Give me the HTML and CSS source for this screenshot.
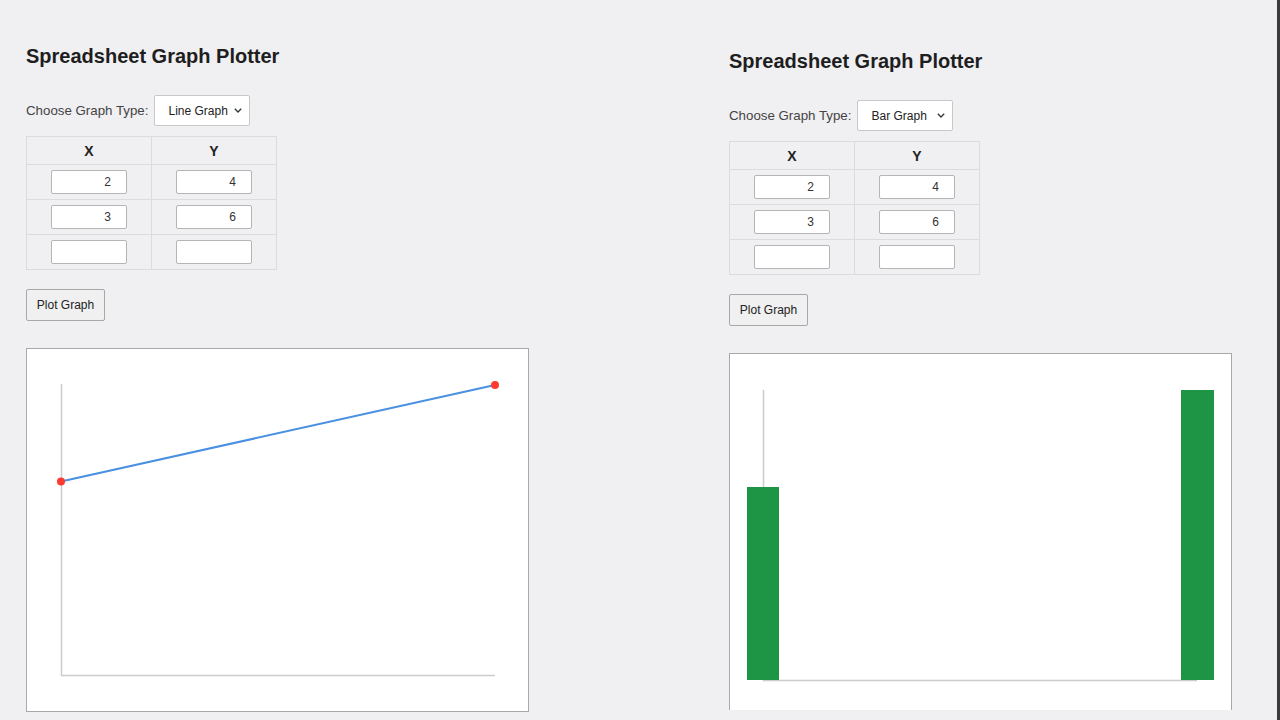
FILE: index.html
```html
<!DOCTYPE html>
<html>
    <head>
        <meta charset="UTF-8" />
        <meta name="viewport" content="width=device-width, initial-scale=1.0" />
        <title>Spreadsheet Graph Plotter</title>
        <link rel="stylesheet" href="styles.css">
    </head>
    <body>
        <div class="page">
            <section class="plotter">
                <h2>Spreadsheet Graph Plotter</h2>
                <div class="type-row">
                    <label for="type1">Choose Graph Type:</label>
                    <span class="select-wrap">
                        <select id="type1">
                            <option selected>Line Graph</option>
                            <option>Bar Graph</option>
                        </select>
                        <svg class="chevron" width="8" height="5" viewBox="0 0 8 5"><path d="M0.8 0.8 L4 4 L7.2 0.8" /></svg>
                    </span>
                </div>
                <table class="data">
                    <tr><th>X</th><th>Y</th></tr>
                    <tr><td><input type="text" value="2"></td><td><input type="text" value="4"></td></tr>
                    <tr><td><input type="text" value="3"></td><td><input type="text" value="6"></td></tr>
                    <tr><td><input type="text"></td><td><input type="text"></td></tr>
                </table>
                <button class="plot-btn">Plot Graph</button>
                <div class="chart">
                    <svg width="501" height="362" viewBox="0 0 501 362">
                        <line x1="34.5" y1="35" x2="34.5" y2="327" class="axis" />
                        <line x1="34" y1="326.5" x2="468" y2="326.5" class="axis" />
                        <line x1="34" y1="132.5" x2="468" y2="36" class="plot-line" />
                        <circle cx="34" cy="132.5" r="4" class="dot" />
                        <circle cx="468" cy="36" r="4" class="dot" />
                    </svg>
                </div>
            </section>

            <section class="plotter plotter-shift">
                <h2>Spreadsheet Graph Plotter</h2>
                <div class="type-row">
                    <label for="type2">Choose Graph Type:</label>
                    <span class="select-wrap">
                        <select id="type2">
                            <option>Line Graph</option>
                            <option selected>Bar Graph</option>
                        </select>
                        <svg class="chevron" width="8" height="5" viewBox="0 0 8 5"><path d="M0.8 0.8 L4 4 L7.2 0.8" /></svg>
                    </span>
                </div>
                <table class="data">
                    <tr><th>X</th><th>Y</th></tr>
                    <tr><td><input type="text" value="2"></td><td><input type="text" value="4"></td></tr>
                    <tr><td><input type="text" value="3"></td><td><input type="text" value="6"></td></tr>
                    <tr><td><input type="text"></td><td><input type="text"></td></tr>
                </table>
                <button class="plot-btn">Plot Graph</button>
                <div class="chart chart-cut">
                    <svg width="501" height="362" viewBox="0 0 501 362">
                        <line x1="33.5" y1="36" x2="33.5" y2="327" class="axis" />
                        <line x1="33" y1="326.5" x2="467" y2="326.5" class="axis" />
                        <rect x="17" y="133" width="32" height="193" class="bar" />
                        <rect x="451" y="36" width="33" height="290" class="bar" />
                    </svg>
                </div>
            </section>
        </div>
    </body>
</html>
```

FILE: styles.css
```css
body {
    margin: 0;
    background: #f0eff2;
    font-family: "Liberation Sans", Arial, sans-serif;
}

.page {
    display: flex;
    height: 720px;
    overflow: hidden;
    box-sizing: border-box;
    padding: 44px 0 0 26px;
    border-right: 3px solid #3b3b3b;
}

.plotter {
    width: 703px;
    flex: none;
}

.plotter-shift {
    margin-top: 5px;
}

h2 {
    margin: 0;
    font-size: 20px;
    line-height: 24px;
    color: #1e1e1e;
}

.type-row {
    display: flex;
    align-items: center;
    gap: 6px;
    margin-top: 27px;
    height: 31px;
}

label {
    font-size: 13.3px;
    color: #444;
}

.select-wrap {
    position: relative;
    display: block;
}

select {
    display: block;
    width: 96px;
    height: 31px;
    -webkit-appearance: none;
    appearance: none;
    font-family: "Liberation Sans", Arial, sans-serif;
    font-size: 12px;
    color: #222;
    background: #fff;
    border: 1px solid #c8c8c8;
    border-radius: 2px;
    padding: 0 20px 0 13px;
}

.chevron {
    position: absolute;
    right: 8px;
    top: 13px;
    fill: none;
    stroke: #333;
    stroke-width: 1.3;
    pointer-events: none;
}

.data {
    margin-top: 10px;
    border-collapse: collapse;
    table-layout: fixed;
    width: 251px;
}

.data th,
.data td {
    border: 1px solid #dcdcdc;
    padding: 0;
    text-align: center;
}

.data th {
    height: 27px;
    font-size: 14px;
    color: #222;
}

.data td {
    height: 34px;
}

.data input {
    width: 76px;
    height: 24px;
    box-sizing: border-box;
    border: 1px solid #b5b5b5;
    border-radius: 2px;
    background: #fff;
    font-family: "Liberation Sans", Arial, sans-serif;
    font-size: 12px;
    color: #333;
    text-align: right;
    padding: 0 15px 0 4px;
    vertical-align: middle;
}

.plot-btn {
    display: block;
    margin-top: 19px;
    width: 79px;
    height: 32px;
    padding: 0;
    font-family: "Liberation Sans", Arial, sans-serif;
    font-size: 12px;
    color: #222;
    background: #f0f0f0;
    border: 1px solid #a8a8a8;
    border-radius: 2px;
}

.chart {
    margin-top: 27px;
    width: 501px;
    height: 362px;
    border: 1px solid #a9a9a9;
    background: #fff;
}

.chart-cut {
    height: 356px;
    border-bottom: none;
    overflow: hidden;
}

.chart svg {
    display: block;
}

.axis {
    stroke: #cccccc;
    stroke-width: 1.5;
}

.plot-line {
    stroke: #4a90e2;
    stroke-width: 2;
}

.dot {
    fill: #ff3b30;
}

.bar {
    fill: #1e9445;
}
```
